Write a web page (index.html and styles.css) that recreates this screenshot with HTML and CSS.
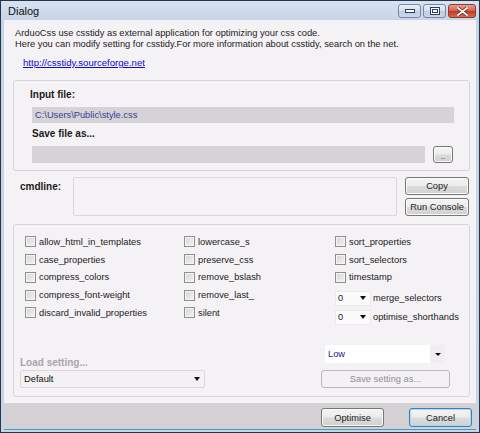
FILE: index.html
```html
<!DOCTYPE html>
<html>
<head>
<meta charset="utf-8">
<link rel="stylesheet" href="styles.css">
</head>
<body>
<div class="window">
  <div class="titlebar">
    <span class="title">Dialog</span>
    <div class="caption">
      <div class="cap-btn"><svg width="10" height="4" viewBox="0 0 10 4"><rect x="0.5" y="0.5" width="9" height="3" fill="#fff" stroke="#2d3f5a"/></svg></div>
      <div class="cap-btn"><svg width="10" height="8" viewBox="0 0 10 8"><rect x="0.5" y="0.5" width="9" height="7" fill="#fff" stroke="#2d3f5a"/><rect x="2.5" y="2.5" width="5" height="3" fill="none" stroke="#2d3f5a"/></svg></div>
      <div class="cap-btn close"><svg width="11" height="9" viewBox="0 0 11 9"><path d="M1 1 L10 8 M10 1 L1 8" stroke="#5a1010" stroke-width="3.2" stroke-linecap="round"/><path d="M1 1 L10 8 M10 1 L1 8" stroke="#fff" stroke-width="2" stroke-linecap="round"/></svg></div>
    </div>
  </div>
  <div class="client">
    <div class="content">
      <p class="intro">ArduoCss use csstidy as external application for optimizing your css code.<br>Here you can modify setting for csstidy.For more information about csstidy, search on the net.</p>
      <a class="link" href="#">http://csstidy.sourceforge.net</a>

      <div class="group files">
        <div class="label-bold in-label">Input file:</div>
        <div class="bar input-bar">C:\Users\Public\style.css</div>
        <div class="label-bold save-label">Save file as...</div>
        <div class="save-row">
          <div class="bar save-bar"></div>
          <div class="btn browse">..</div>
        </div>
      </div>

      <div class="cmd-row">
        <div class="label-bold cmd-label">cmdline:</div>
        <div class="cmd-box"></div>
        <div class="cmd-buttons">
          <div class="btn">Copy</div>
          <div class="btn">Run Console</div>
        </div>
      </div>

      <div class="group options">
        <div class="opt-grid">
          <div class="col col1">
            <label class="check"><span class="box"></span>allow_html_in_templates</label>
            <label class="check"><span class="box"></span>case_properties</label>
            <label class="check"><span class="box"></span>compress_colors</label>
            <label class="check"><span class="box"></span>compress_font-weight</label>
            <label class="check"><span class="box"></span>discard_invalid_properties</label>
          </div>
          <div class="col col2">
            <label class="check"><span class="box"></span>lowercase_s</label>
            <label class="check"><span class="box"></span>preserve_css</label>
            <label class="check"><span class="box"></span>remove_bslash</label>
            <label class="check"><span class="box"></span>remove_last_</label>
            <label class="check"><span class="box"></span>silent</label>
          </div>
          <div class="col col3">
            <label class="check"><span class="box"></span>sort_properties</label>
            <label class="check"><span class="box"></span>sort_selectors</label>
            <label class="check"><span class="box"></span>timestamp</label>
            <div class="spin-row first"><div class="spin"><span>0</span><span class="arrow"></span></div>merge_selectors</div>
            <div class="spin-row"><div class="spin"><span>0</span><span class="arrow"></span></div>optimise_shorthands</div>
          </div>
        </div>
        <div class="settings">
          <div class="load">
            <div class="label-bold disabled-label">Load setting...</div>
            <div class="combo default-combo"><span>Default</span><span class="arrow"></span></div>
          </div>
          <div class="save-set">
            <div class="combo low-combo"><span>Low</span><span class="arrow-area"><span class="arrow"></span></span></div>
            <div class="btn disabled">Save setting as...</div>
          </div>
        </div>
      </div>
    </div>
    <div class="footer">
      <div class="btn foot-btn">Optimise</div>
      <div class="btn foot-btn default">Cancel</div>
    </div>
  </div>
</div>
</body>
</html>
```
FILE: styles.css
```css
* { box-sizing: border-box; }
html, body { margin: 0; padding: 0; }
body {
  font-family: "Liberation Sans", Arial, sans-serif;
  font-size: 9.3px;
  color: #1a1a1a;
  background: #fff;
}
.window {
  width: 480px;
  height: 433px;
  border: 1px solid #263645;
  background: linear-gradient(#d7e3f1, #c4d4e7 20px, #c6d5e8);
  padding: 0 3px 2px 3px;
  display: flex;
  flex-direction: column;
}
.titlebar {
  height: 19px;
  display: flex;
  align-items: center;
  justify-content: space-between;
  flex: none;
}
.title {
  font-size: 11px;
  color: #111;
  margin-left: 4px;
  margin-top: 1px;
}
.caption {
  display: flex;
  gap: 2px;
  align-self: flex-start;
  margin-top: 3px;
}
.cap-btn {
  width: 23px;
  height: 14px;
  border: 1px solid #7388a6;
  border-radius: 3px;
  background: linear-gradient(#e9f0f8, #d2deed 50%, #bccde3 51%, #c9d8ea);
  display: flex;
  align-items: center;
  justify-content: center;
}
.cap-btn.close {
  width: 28px;
  border-color: #8a3a2e;
  background: linear-gradient(#e9a090, #d0604c 50%, #c03a22 51%, #d46a50);
}
.client {
  flex: 1;
  display: flex;
  flex-direction: column;
  background: #f5f2f5;
  border-bottom: 1px solid #3d9fc6;
}
.content {
  flex: 1;
  padding: 0 6px 0 9px;
}
.intro {
  margin: 8px 0 0 2px;
  line-height: 11px;
}
.link {
  display: block;
  margin: 7px 0 0 10px;
  line-height: 11px;
  font-size: 9.6px;
  color: #0a0ad0;
  text-decoration: underline;
}
.group {
  border: 1px solid #d7d3da;
  border-radius: 3px;
}
.files {
  margin-top: 12px;
  height: 91px;
  padding: 8px 15px 0 18px;
}
.label-bold {
  font-weight: bold;
  font-size: 10px;
  line-height: 11px;
}
.in-label { margin-left: -2px; }
.bar {
  background: #d5d3d6;
  height: 16px;
  line-height: 16px;
  padding-left: 3px;
  color: #3a3a96;
}
.input-bar { margin-top: 7px; }
.save-label { margin-top: 5px; }
.save-row {
  margin-top: 7px;
  display: flex;
  gap: 8px;
  align-items: center;
}
.save-bar { width: 393px; height: 17px; }
.btn {
  height: 18px;
  border: 1px solid #777;
  border-radius: 3px;
  background: linear-gradient(#f4f4f4, #ececec 48%, #dcdcdc 52%, #d0d0d0);
  display: flex;
  align-items: center;
  justify-content: center;
  color: #222;
  box-shadow: inset 0 0 0 1px #fbfbfb;
}
.browse { width: 20px; height: 17px; font-size: 8px; padding-top: 4px; }
.cmd-row {
  margin-top: 6px;
  display: flex;
  padding-left: 7px;
}
.cmd-label {
  width: 53px;
  margin-top: 4px;
}
.cmd-box {
  width: 324px;
  height: 39px;
  border: 1px solid #d9d6dc;
  border-radius: 2px;
  background: #f5f2f5;
}
.cmd-buttons {
  margin-left: 8px;
  display: flex;
  flex-direction: column;
  gap: 3px;
}
.cmd-buttons .btn { width: 64px; }
.options {
  margin-top: 8px;
  height: 173px;
  display: flex;
  flex-direction: column;
}
.opt-grid {
  display: grid;
  grid-template-columns: 159px 151px 1fr;
  padding: 8px 0 0 11px;
}
.col { display: flex; flex-direction: column; }
.check {
  height: 17.75px;
  display: flex;
  align-items: center;
  gap: 3px;
  white-space: nowrap;
}
.box {
  width: 11px;
  height: 11px;
  border: 1px solid #8f8f8f;
  background: linear-gradient(135deg, #d6d6d6, #f2f2f2);
  box-shadow: inset 0 0 0 1px #f4f4f4;
  flex: none;
}
.spin-row {
  display: flex;
  align-items: center;
  gap: 2px;
  height: 15px;
  margin-top: 4px;
  white-space: nowrap;
}
.spin-row.first { margin-top: 4.5px; }
.spin {
  width: 36px;
  height: 15px;
  background: #fbfbfb;
  border: 1px solid #ebe9ec;
  display: flex;
  align-items: center;
  justify-content: space-between;
  padding: 0 4px 0 2px;
  color: #222;
}
.arrow {
  width: 0;
  height: 0;
  border-left: 3.5px solid transparent;
  border-right: 3.5px solid transparent;
  border-top: 4px solid #111;
}
.settings {
  margin-top: auto;
  padding: 0 19px 8px 6px;
  display: flex;
  justify-content: space-between;
  align-items: flex-end;
}
.disabled-label { color: #a8a6aa; margin-bottom: 2px; }
.combo {
  height: 18px;
  display: flex;
  align-items: center;
  justify-content: space-between;
}
.default-combo {
  width: 185px;
  background: #f3f1f3;
  border: 1px solid #dad7dc;
  border-radius: 2px;
  padding: 0 4px 0 3px;
  color: #111;
}
.save-set {
  display: flex;
  flex-direction: column;
  align-items: flex-end;
  gap: 7px;
}
.low-combo {
  width: 120px;
  margin-right: 5px;
  background: #fff;
  padding-left: 3px;
  color: #1a1a86;
}
.arrow-area {
  width: 15px;
  height: 18px;
  background: #f0eef0;
  display: flex;
  align-items: center;
  justify-content: center;
}
.arrow-area .arrow { border-left-width: 3px; border-right-width: 3px; border-top-width: 3px; }
.btn.disabled {
  width: 129px;
  border-color: #b9b7bb;
  background: #f3f1f3;
  color: #8f8d91;
  box-shadow: none;
}
.footer {
  height: 26px;
  flex: none;
  background: #d4d1d4;
  display: flex;
  justify-content: flex-end;
  align-items: flex-start;
  gap: 25px;
  padding: 5px 4px 0 0;
}
.foot-btn { width: 63px; height: 19px; }
.foot-btn.default {
  border-color: #3a7eb6;
  box-shadow: inset 0 0 0 1px #a8dcf6;
}
```
